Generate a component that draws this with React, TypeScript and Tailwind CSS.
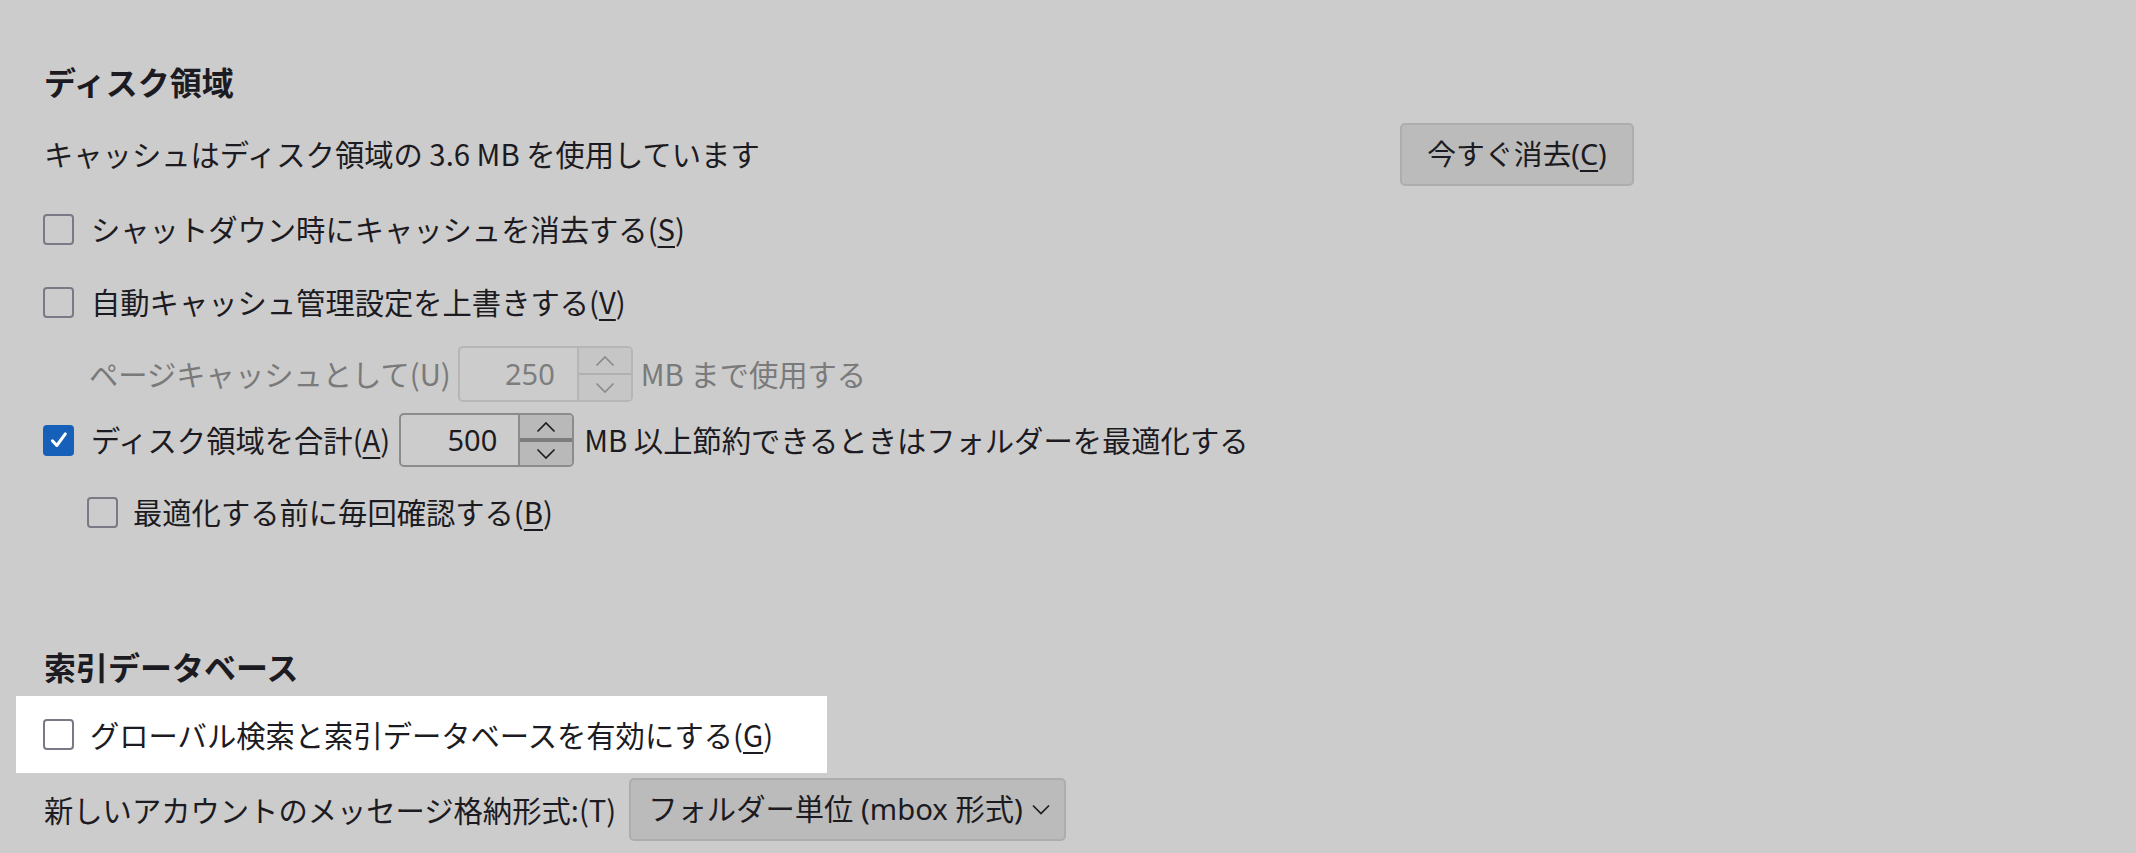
import React from "react";

const CJK = { fontFamily: '"Noto Sans CJK JP", "Noto Sans", sans-serif' };
const UI = { fontFamily: '"Noto Sans", "Noto Sans CJK JP", sans-serif' };

function Checkbox({ checked }: { checked?: boolean }) {
  if (checked) {
    return (
      <span className="w-[31px] h-[31px] rounded-[4px] bg-[#1760b9] flex items-center justify-center shrink-0">
        <svg width="22" height="22" viewBox="0 0 16 16">
          <path d="M3.2 8.6 L6.4 12 L12.6 3.6" stroke="white" strokeWidth="2.2" fill="none" strokeLinecap="round" strokeLinejoin="round" />
        </svg>
      </span>
    );
  }
  return <span className="w-[31px] h-[31px] rounded-[4px] border-2 border-[#7a7a86] shrink-0 box-border" />;
}

function Key({ k }: { k: string }) {
  return (
    <>
      (<span className="underline underline-offset-[5px] decoration-[2px]">{k}</span>)
    </>
  );
}

function Chevron({ up, color }: { up?: boolean; color: string }) {
  return (
    <svg width="20" height="12" viewBox="0 0 20 12">
      {up ? (
        <polyline points="1.5,10.5 10,2 18.5,10.5" stroke={color} strokeWidth="1.6" fill="none" />
      ) : (
        <polyline points="1.5,1.5 10,10 18.5,1.5" stroke={color} strokeWidth="1.6" fill="none" />
      )}
    </svg>
  );
}

function Spinner({ value, disabled }: { value: string; disabled?: boolean }) {
  if (disabled) {
    return (
      <div className="w-[175px] h-[56px] border-2 border-[#b6b6b6] rounded-[5px] flex shrink-0 box-border overflow-hidden">
        <div className="flex-1 flex items-center justify-end pr-[22px] text-[29px] text-[#7d7d7d]" style={UI}>
          {value}
        </div>
        <div className="w-[54px] border-l-2 border-[#b6b6b6] flex flex-col">
          <div className="flex-1 bg-[#c6c6c6] flex items-center justify-center">
            <Chevron up color="#8a8a8a" />
          </div>
          <div className="h-[2px] bg-[#b0b0b0]" />
          <div className="flex-1 bg-[#c6c6c6] flex items-center justify-center">
            <Chevron color="#8a8a8a" />
          </div>
        </div>
      </div>
    );
  }
  return (
    <div className="w-[175px] h-[54px] border-2 border-[#8c8c8c] rounded-[5px] flex shrink-0 box-border overflow-hidden">
      <div className="flex-1 flex items-center justify-end pr-[21px] text-[29px] text-[#1c1b22]" style={UI}>
        {value}
      </div>
      <div className="w-[54px] border-l-2 border-[#8c8c8c] flex flex-col">
        <div className="flex-1 bg-[#b9b9b9] flex items-center justify-center">
          <Chevron up color="#1c1b22" />
        </div>
        <div className="h-[4px] bg-[#7d7d7d]" />
        <div className="flex-1 bg-[#b9b9b9] flex items-center justify-center">
          <Chevron color="#1c1b22" />
        </div>
      </div>
    </div>
  );
}

export default function App() {
  return (
    <div className="min-h-screen w-full bg-[#cccccc] text-[#1c1b22] overflow-hidden" style={CJK}>
      <div className="flex flex-col pl-[16px] pt-[59px]">
        <div className="pl-[28px] h-[44px] flex items-center text-[32px] font-bold leading-none">ディスク領域</div>

        <div className="pl-[28px] mt-[19px] h-[64px] flex items-center">
          <span className="w-[1356px] shrink-0 text-[29.3px]">キャッシュはディスク領域の 3.6 MB を使用しています</span>
          <button
            className="w-[234px] h-[63px] rounded-[5px] border-2 border-[#adadad] bg-[#bbbbbb] text-[28.8px] flex items-center justify-center text-[#1c1b22]"
            style={UI}
          >
            <span>
              今すぐ消去<Key k="C" />
            </span>
          </button>
        </div>

        <div className="pl-[27px] mt-[18px] h-[50px] flex items-center gap-[17px] text-[29.3px]">
          <Checkbox />
          <span>
            シャットダウン時にキャッシュを消去する<Key k="S" />
          </span>
        </div>

        <div className="pl-[27px] mt-[23px] h-[50px] flex items-center gap-[17px] text-[29.3px]">
          <Checkbox />
          <span>
            自動キャッシュ管理設定を上書きする<Key k="V" />
          </span>
        </div>

        <div className="pl-[73px] mt-[19px] h-[56px] flex items-center text-[29.3px] text-[#7a7a7a]">
          <span className="mr-[7px]">ページキャッシュとして(U)</span>
          <Spinner value="250" disabled />
          <span className="ml-[8px]">MB まで使用する</span>
        </div>

        <div className="pl-[27px] mt-[11px] h-[54px] flex items-center text-[29.3px]">
          <Checkbox checked />
          <span className="ml-[17px] mr-[9px]">
            ディスク領域を合計<Key k="A" />
          </span>
          <Spinner value="500" />
          <span className="ml-[10px]">MB 以上節約できるときはフォルダーを最適化する</span>
        </div>

        <div className="pl-[71px] mt-[20px] h-[50px] flex items-center gap-[15px] text-[29.3px]">
          <Checkbox />
          <span>
            最適化する前に毎回確認する<Key k="B" />
          </span>
        </div>

        <div className="pl-[28px] mt-[107px] h-[44px] flex items-center text-[32px] font-bold leading-none">索引データベース</div>

        <div className="mt-[8px] w-[811px] h-[77px] bg-white pl-[27px] flex items-center gap-[16px] text-[29.3px]">
          <Checkbox />
          <span>
            グローバル検索と索引データベースを有効にする<Key k="G" />
          </span>
        </div>

        <div className="pl-[28px] mt-[5px] h-[63px] flex items-center text-[29.3px]">
          <span className="mr-[13px]">新しいアカウントのメッセージ格納形式:(T)</span>
          <div
            className="w-[437px] h-[63px] rounded-[5px] border-2 border-[#adadad] bg-[#bbbbbb] flex items-center pl-[17px] pr-[14px] text-[29.3px]"
            style={UI}
          >
            <span className="flex-1">フォルダー単位 (mbox 形式)</span>
            <svg width="18" height="11" viewBox="0 0 18 11">
              <polyline points="1,1.5 9,9.5 17,1.5" stroke="#1c1b22" strokeWidth="1.7" fill="none" />
            </svg>
          </div>
        </div>
      </div>
    </div>
  );
}
